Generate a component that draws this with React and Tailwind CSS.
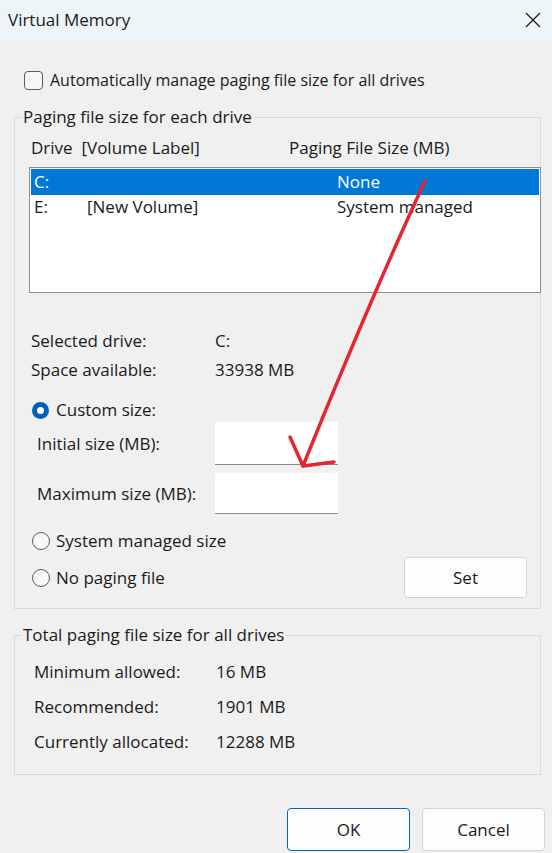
import React from 'react';

const font = { fontFamily: '"Open Sans", "Noto Sans", sans-serif' };

function Radio({ checked }) {
  if (checked) {
    return (
      <span className="w-[17px] h-[17px] rounded-full bg-[#005fb8] flex items-center justify-center shrink-0">
        <span className="w-[7px] h-[7px] rounded-full bg-white" />
      </span>
    );
  }
  return <span className="w-[18px] h-[18px] rounded-full border border-[#5c5c5c] bg-[#f8f8f8] shrink-0" />;
}

function Field({ label, cls }) {
  return (
    <div className={`flex items-center ${cls}`}>
      <span className="w-[186px] pl-[8px]">{label}</span>
      <div className="w-[123px] h-full bg-white border-b border-[#8a8a8a]" />
    </div>
  );
}

export default function App() {
  return (
    <div
      className="relative w-[552px] h-[853px] bg-[#f0f0f0] overflow-hidden text-[17px] leading-[22px] text-[#1a1a1a]"
      style={font}
    >
      {/* title bar */}
      <div className="h-[40px] bg-[#eef5f9] flex items-center justify-between pl-[8px] pr-[10px]">
        <span className="text-[17px]">Virtual Memory</span>
        <svg width="16" height="16" viewBox="0 0 16 16" className="mr-[1px]">
          <path d="M1 1L15 15M15 1L1 15" stroke="#1a1a1a" strokeWidth="1.3" fill="none" />
        </svg>
      </div>

      <div className="pl-[14px] pr-[11px]">
        <div className="flex items-center mt-[30px] pl-[10px] h-[20px] text-[16px]">
          <span className="w-[19px] h-[19px] rounded-[4px] border border-[#5a5a5a] bg-[#f6f6f6]" />
          <span className="ml-[7px]">Automatically manage paging file size for all drives</span>
        </div>

        <fieldset className="mt-[16px] border border-[#dadada] pb-[10px]">
          <legend className="ml-[7px] px-[1px]">Paging file size for each drive</legend>
          <div className="pl-[14px]">
            <div className="flex mt-[9px] pl-[2px]">
              <span className="w-[258px]">Drive&nbsp; [Volume Label]</span>
              <span>Paging File Size (MB)</span>
            </div>
            <div className="mt-[8px] -mr-[1px] h-[126px] bg-white border border-[#8c8f94] p-[1px]">
              <div className="flex h-[26px] items-center bg-[#0078d7] text-white pl-[3px]">
                <span className="w-[303px]">C:</span>
                <span>None</span>
              </div>
              <div className="flex h-[24px] items-center pl-[3px]">
                <span className="w-[53px]">E:</span>
                <span className="w-[250px]">[New Volume]</span>
                <span>System managed</span>
              </div>
            </div>

            <div className="flex mt-[37px] pl-[2px]">
              <span className="w-[184px]">Selected drive:</span>
              <span>C:</span>
            </div>
            <div className="flex mt-[7px] pl-[2px]">
              <span className="w-[184px]">Space available:</span>
              <span>33938 MB</span>
            </div>

            <div className="flex items-center gap-[7px] mt-[18px] pl-[3px]">
              <Radio checked />
              <span>Custom size:</span>
            </div>
            <Field label="Initial size (MB):" cls="mt-[1px] h-[43px]" />
            <Field label="Maximum size (MB):" cls="mt-[8px] h-[41px]" />

            <div className="flex items-center gap-[6px] mt-[16px] pl-[3px]">
              <Radio />
              <span>System managed size</span>
            </div>
            <div className="flex items-center mt-[5px] h-[41px] pl-[3px] pr-[13px]">
              <Radio />
              <span className="ml-[6px] flex-1">No paging file</span>
              <button className="w-[123px] h-[41px] bg-[#fdfdfd] border border-[#d3d3d3] rounded-[4px]">Set</button>
            </div>
          </div>
        </fieldset>

        <fieldset className="mt-[15px] border border-[#dadada] pb-[21px]">
          <legend className="ml-[7px] px-[1px]">Total paging file size for all drives</legend>
          <div className="pl-[19px]">
            {[
              ['Minimum allowed:', '16 MB', 'mt-[15px]'],
              ['Recommended:', '1901 MB', 'mt-[13px]'],
              ['Currently allocated:', '12288 MB', 'mt-[13px]'],
            ].map(([k, v, mt]) => (
              <div key={k} className={`flex ${mt}`}>
                <span className="w-[182px]">{k}</span>
                <span>{v}</span>
              </div>
            ))}
          </div>
        </fieldset>
      </div>

      <div className="flex justify-end gap-[12px] mt-[33px] pr-[7px]">
        <button className="w-[123px] h-[43px] bg-[#fdfdfd] border border-[#0067c0] rounded-[4px]">OK</button>
        <button className="w-[123px] h-[43px] bg-[#fdfdfd] border border-[#d3d3d3] rounded-[4px]">Cancel</button>
      </div>

      {/* red annotation arrow */}
      <svg className="absolute inset-0 pointer-events-none" width="552" height="853">
        <g stroke="#e42631" strokeWidth="3.5" strokeLinecap="round" fill="none">
          <path d="M425 181 Q 370 300 303 466" />
          <path d="M290 437 L303 466 L334 462" strokeLinejoin="round" />
        </g>
      </svg>
    </div>
  );
}
